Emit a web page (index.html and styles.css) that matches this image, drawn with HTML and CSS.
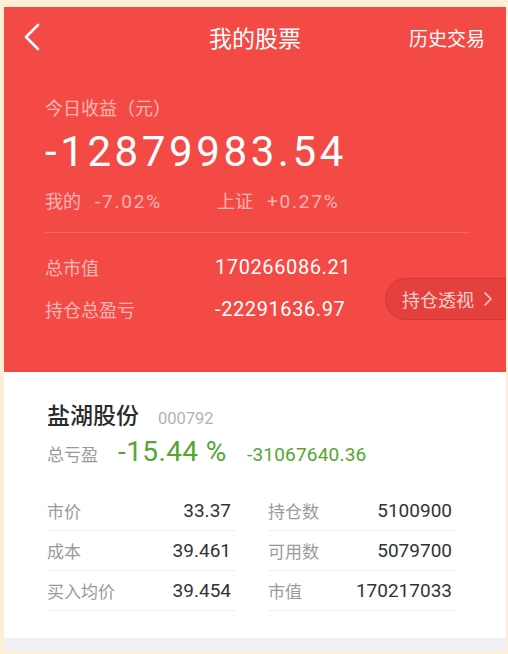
FILE: index.html
```html
<!DOCTYPE html>
<html lang="zh">
<head>
<meta charset="utf-8">
<title>我的股票</title>
<link rel="stylesheet" href="styles.css">
</head>
<body>
<div class="frame">
  <div class="hero">
    <div class="nav">
      <span class="back">
        <svg width="18" height="28" viewBox="0 0 18 28"><polyline points="15,2 3,14 15,26" fill="none" stroke="#fff" stroke-width="2.6" stroke-linecap="round" stroke-linejoin="round"/></svg>
      </span>
      <span class="title">我的股票</span>
      <span class="history">历史交易</span>
    </div>
    <div class="summary">
      <div class="label">今日收益（元）</div>
      <div class="big">-12879983.54</div>
      <div class="compare">
        <span class="cmp"><span class="cmp-k">我的</span><span class="cmp-v">-7.02%</span></span>
        <span class="cmp"><span class="cmp-k">上证</span><span class="cmp-v">+0.27%</span></span>
      </div>
      <div class="divider"></div>
    </div>
    <div class="stats">
      <div class="stat-grid">
        <span class="stat-k">总市值</span><span class="stat-v">170266086.21</span>
        <span class="stat-k">持仓总盈亏</span><span class="stat-v">-22291636.97</span>
      </div>
      <div class="pill">持仓透视
        <svg width="10" height="16" viewBox="0 0 10 16"><polyline points="2,2 8,8 2,14" fill="none" stroke="#fbd0cc" stroke-width="1.5" stroke-linecap="round" stroke-linejoin="round"/></svg>
      </div>
    </div>
  </div>
  <div class="card">
    <div class="stock-head">
      <span class="stock-name">盐湖股份</span>
      <span class="stock-code">000792</span>
    </div>
    <div class="pl-row">
      <span class="pl-k">总亏盈</span>
      <span class="pl-pct">-15.44 %</span>
      <span class="pl-amt">-31067640.36</span>
    </div>
    <div class="table">
      <div class="col">
        <div class="cell"><span class="ck">市价</span><span class="cv">33.37</span></div>
        <div class="cell"><span class="ck">成本</span><span class="cv">39.461</span></div>
        <div class="cell"><span class="ck">买入均价</span><span class="cv">39.454</span></div>
      </div>
      <div class="col">
        <div class="cell"><span class="ck">持仓数</span><span class="cv">5100900</span></div>
        <div class="cell"><span class="ck">可用数</span><span class="cv">5079700</span></div>
        <div class="cell"><span class="ck">市值</span><span class="cv">170217033</span></div>
      </div>
    </div>
  </div>
  <div class="band"></div>
</div>
</body>
</html>
```
FILE: styles.css
```css
* { box-sizing: border-box; }
html, body { margin: 0; padding: 0; }
body {
  background: #fdefd6;
  font-family: Roboto, "Noto Sans CJK SC", sans-serif;
  width: 508px;
  height: 654px;
  overflow: hidden;
}
.frame {
  padding: 7px 2px 0 4px;
}
.hero {
  background: #f44a46;
  height: 365px;
  color: #fff;
}
.nav {
  height: 60px;
  display: grid;
  grid-template-columns: 1fr auto 1fr;
  align-items: center;
  padding: 0 21px 0 19px;
}
.back { display: flex; }
.title {
  font-size: 23px;
  margin-left: 2px;
}
.history {
  font-size: 19px;
  text-align: right;
  white-space: nowrap;
}
.summary {
  padding: 30px 36px 0 41px;
}
.label {
  font-size: 18px;
  line-height: 24px;
  color: rgba(255,255,255,0.62);
}
.big {
  font-size: 42px;
  line-height: 50px;
  letter-spacing: 3.6px;
  margin-top: 6px;
}
.compare {
  display: flex;
  font-size: 18px;
  line-height: 24px;
  color: rgba(255,255,255,0.6);
  margin-top: 13px;
}
.cmp { display: flex; gap: 14px; }
.cmp:first-child { width: 172px; }
.cmp-v { font-size: 19px; letter-spacing: 1.8px; }
.divider {
  height: 1px;
  background: rgba(255,255,255,0.16);
  margin-top: 18px;
}
.stats {
  display: flex;
  align-items: flex-end;
  padding: 13px 0 0 41px;
}
.stat-grid {
  display: grid;
  grid-template-columns: 170px auto;
  grid-auto-rows: 42px;
  align-items: center;
}
.stat-k { color: rgba(255,255,255,0.62); font-size: 18px; }
.stat-v { color: #fff; font-size: 20px; letter-spacing: 0.6px; }
.pill {
  margin-left: auto;
  margin-bottom: 10px;
  height: 42px;
  width: 121px;
  border-radius: 21px 0 0 21px;
  background: #e4413e;
  border: 1px solid #d63935;
  border-right: none;
  color: #fbd0cc;
  font-size: 18px;
  display: flex;
  align-items: center;
  gap: 9px;
  padding-left: 16px;
}
.card {
  background: #fff;
  padding: 30px 0 27px 43px;
}
.stock-head {
  display: flex;
  align-items: baseline;
  gap: 19px;
  height: 30px;
  line-height: 30px;
}
.stock-name {
  font-size: 23px;
  font-weight: 500;
  color: #2b2b2b;
}
.stock-code {
  font-size: 16.5px;
  color: #b3b3b3;
}
.pl-row {
  display: flex;
  align-items: baseline;
  height: 32px;
  line-height: 32px;
  margin-top: 4px;
}
.pl-k { font-size: 17px; color: #9a9a9a; width: 71px; }
.pl-pct { font-size: 28px; color: #56a632; width: 129px; letter-spacing: 0.4px; }
.pl-amt { font-size: 19px; color: #56a632; letter-spacing: 0.2px; }
.table {
  display: flex;
  gap: 33px;
  margin-top: 23px;
}
.col { width: 188px; }
.cell {
  display: flex;
  justify-content: space-between;
  align-items: center;
  height: 40px;
  border-bottom: 1px solid #efefef;
  padding-right: 4px;
}
.ck { font-size: 17px; color: #9a9a9a; }
.cv { font-size: 19px; color: #333; }
.band {
  height: 13px;
  background: #f1f1f5;
}
```
